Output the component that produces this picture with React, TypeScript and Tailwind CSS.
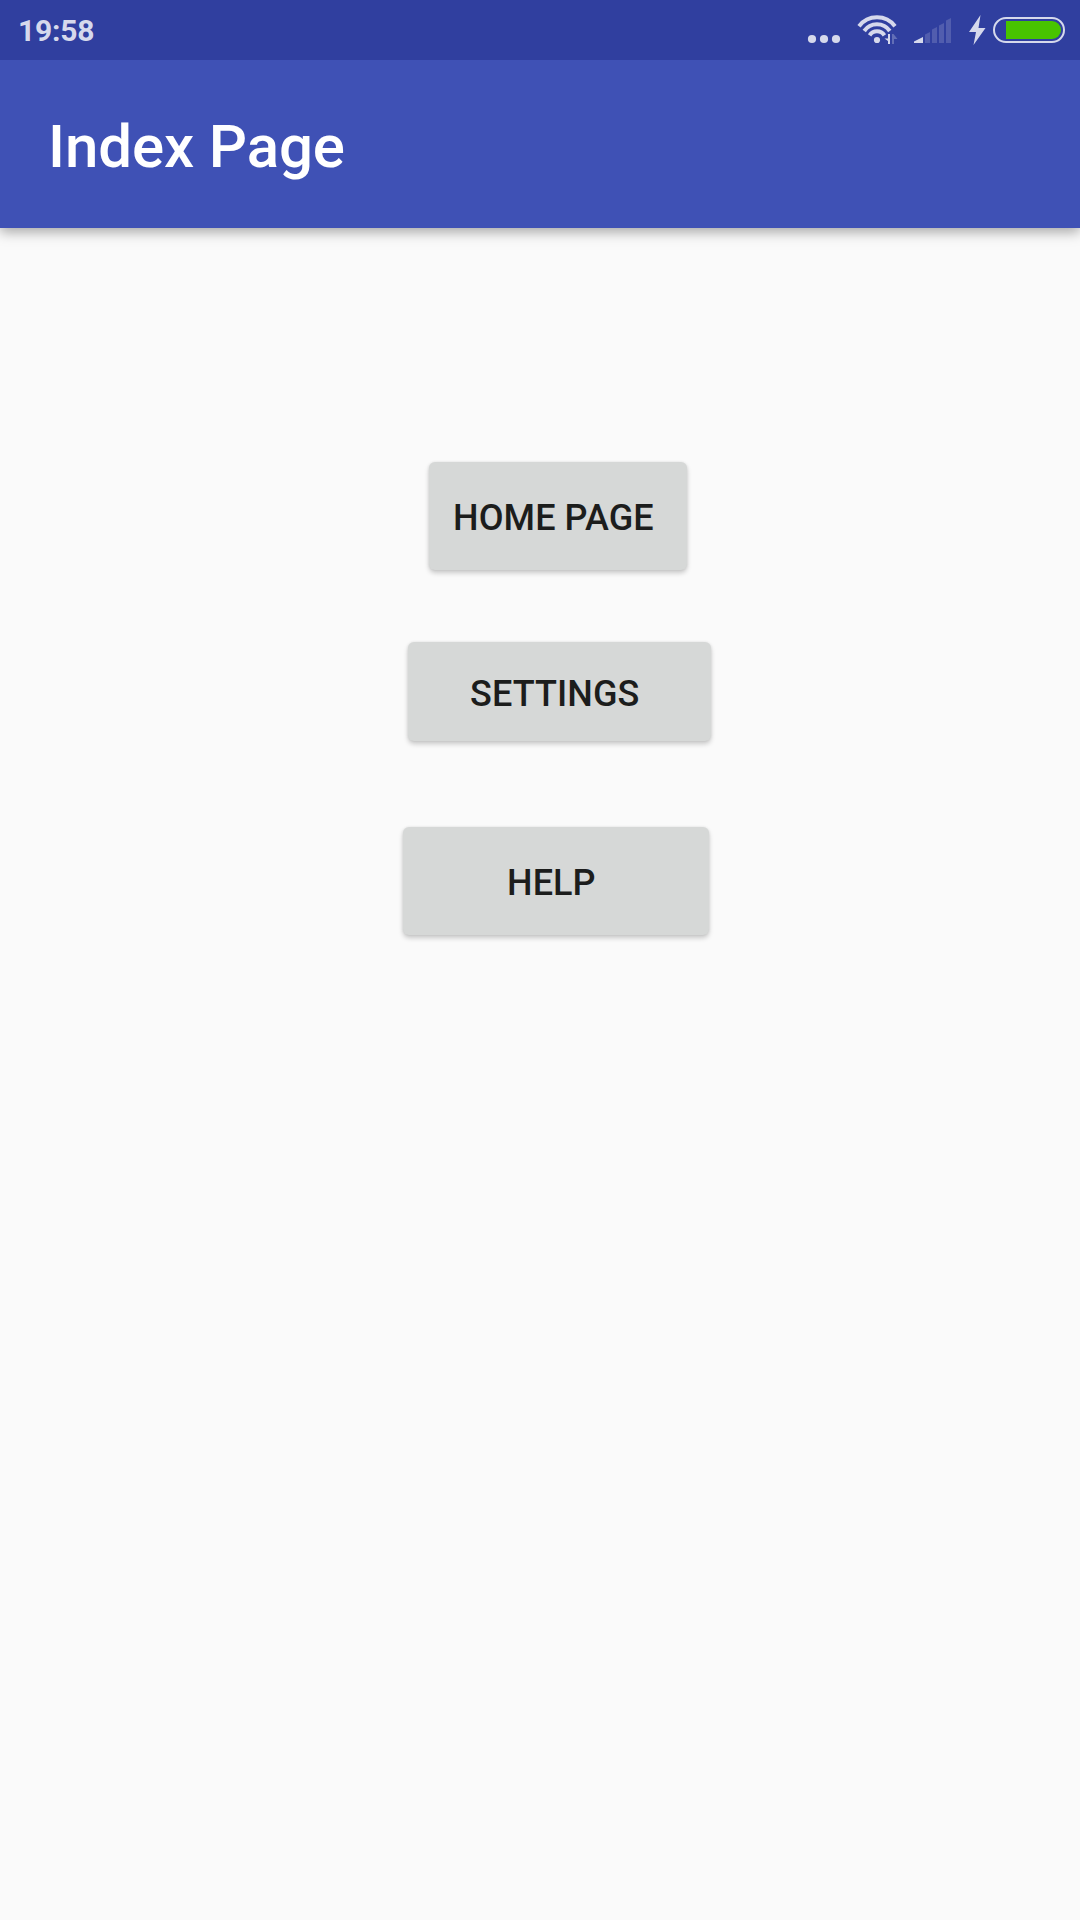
import React from "react";

function StatusBar() {
  return (
    <div className="relative z-10 flex h-[60px] shrink-0 items-start justify-between bg-[#303f9f] text-[#d6d9ec]">
      <span className="pl-[18px] pt-[13px] text-[30px] leading-[35px] font-bold tracking-[-0.2px]">19:58</span>
      <div className="flex h-[60px]">
        <svg width="50" height="60" viewBox="800 0 50 60" fill="currentColor">
          <circle cx="812" cy="39" r="4.1" />
          <circle cx="824" cy="39" r="4.1" />
          <circle cx="836" cy="39" r="4.1" />
        </svg>
        <svg width="54" height="60" viewBox="850 0 54 60" fill="none" stroke="currentColor" strokeWidth="4">
          <circle cx="877" cy="40" r="3.1" fill="currentColor" stroke="none" />
          <path d="M859 26.2a22.6 22.6 0 0 1 36 0" />
          <path d="M864.2 31a15.6 15.6 0 0 1 25.6 0" />
          <path d="M869.6 35.400a8.8 8.8 0 0 1 14.800 0" />
          <path d="M890 34v10h-2v-3l-3.500-2.500h3.500V34z" fill="currentColor" stroke="none" />
          <path d="M892 44V34h1.500l4 5h-3.500V44z" fill="currentColor" opacity=".3" stroke="none" />
        </svg>
        <svg width="56" height="60" viewBox="904 0 56 60" fill="currentColor">
          <path d="M914 43v-1.500l9-4.500v6z" />
          <path
            d="M925 43v-8.500l5-2.500v11zM932 43V29.500l5-2.500v16zM939 43V25.500l5-2.500v20zM946 43V20.500l5-2.500v25z"
            opacity=".2"
          />
        </svg>
        <svg width="120" height="60" viewBox="960 0 120 60">
          <path d="M980.500 15l-11.500 17h7l-2.500 13L985.500 28h-7z" fill="currentColor" />
          <rect x="994" y="18" width="70" height="24" rx="12" fill="none" stroke="currentColor" strokeWidth="2" />
          <path d="M1006 21h46a9 9 0 0 1 0 18h-46z" fill="#48c400" />
        </svg>
      </div>
    </div>
  );
}

const buttonBase =
  "flex items-center rounded-[6px] bg-[#d6d8d7] text-[36px] leading-[42px] font-medium tracking-[0.1px] whitespace-nowrap text-[#1c1d1c] shadow-[0_3px_5px_rgba(0,0,0,0.2),0_0_3px_rgba(0,0,0,0.08)]";

export default function App() {
  return (
    <div className="flex h-[1920px] w-[1080px] flex-col overflow-hidden bg-[#fafafa] font-['Roboto',sans-serif]">
      <StatusBar />
      <header className="flex h-[168px] shrink-0 items-center bg-[#3f51b5] pt-[5px] pl-12 shadow-[0_4px_12px_rgba(0,0,0,0.34)]">
        <h1 className="text-[60px] leading-[70px] font-medium tracking-[-0.1px] text-white">Index Page</h1>
      </header>
      <main className="flex flex-col items-start pt-[234px]">
        <button className={`${buttonBase} ml-[429px] h-[108px] w-[258px] pl-[24px] pt-[4px]`}>HOME PAGE</button>
        <button className={`${buttonBase} mt-[72px] ml-[408px] h-[99px] w-[303px] pl-[62px] pt-[5px]`}>SETTINGS</button>
        <button className={`${buttonBase} mt-[86px] ml-[403px] h-[108px] w-[306px] pl-[104px] pt-[4px]`}>HELP</button>
      </main>
    </div>
  );
}
